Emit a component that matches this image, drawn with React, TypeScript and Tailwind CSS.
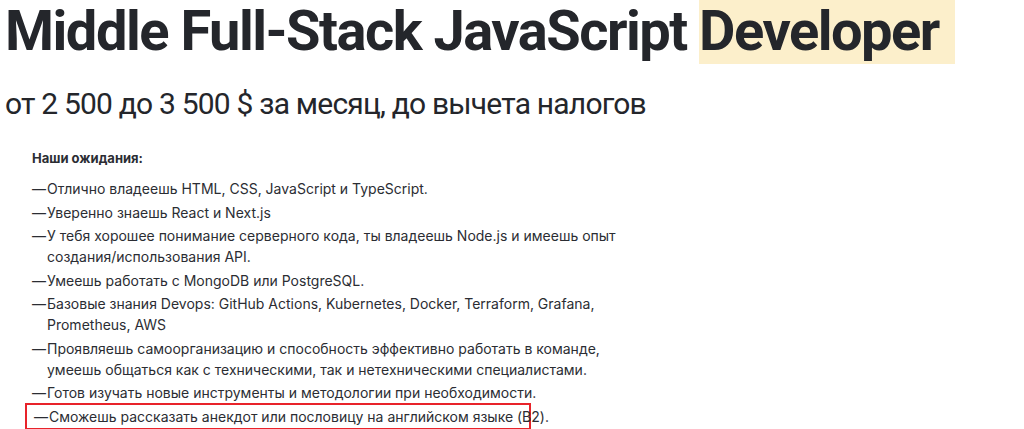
import React from "react";

const items: string[] = [
  "Отлично владеешь HTML, CSS, JavaScript и TypeScript.",
  "Уверенно знаешь React и Next.js",
  "У тебя хорошее понимание серверного кода, ты владеешь Node.js и имеешь опыт создания/использования API.",
  "Умеешь работать с MongoDB или PostgreSQL.",
  "Базовые знания Devops: GitHub Actions, Kubernetes, Docker, Terraform, Grafana, Prometheus, AWS",
  "Проявляешь самоорганизацию и способность эффективно работать в команде, умеешь общаться как с техническими, так и нетехническими специалистами.",
  "Готов изучать новые инструменты и методологии при необходимости.",
];

const App: React.FC = () => {
  return (
    <div className="w-[1024px] h-[429px] overflow-hidden bg-white text-[#24262b] font-[Roboto]">
      <h1 className="pl-[5px] text-[56px] leading-[62px] font-bold tracking-[-1.5px] whitespace-nowrap">
        Middle Full-Stack JavaScript <span className="bg-[#fcefcb] pr-4">Developer</span>
      </h1>
      <p className="pl-[5px] mt-[24px] text-[30px] leading-[36px] tracking-[-0.8px] whitespace-nowrap">
        от 2 500 до 3 500 $ за месяц, до вычета налогов
      </p>
      <div className="pl-[32px] mt-[26px] text-[14px] leading-[21px] font-[Inter] text-[#2b2d33]">
        <div className="font-bold mb-[9px] text-[13px]">Наши ожидания:</div>
        <ul className="flex flex-col gap-[2.5px] w-[600px]">
          {items.map((t) => (
            <li key={t} className="flex">
              <span className="w-[15px] shrink-0">—</span>
              <span>{t}</span>
            </li>
          ))}
          <li className="flex -ml-[7px] pl-[7px] border-2 border-[#e8232a] w-[506px] py-[1px] -my-[3px] whitespace-nowrap">
            <span className="w-[15px] shrink-0">—</span>
            <span>Сможешь рассказать анекдот или пословицу на английском языке (B2).</span>
          </li>
        </ul>
      </div>
    </div>
  );
};

export default App;
